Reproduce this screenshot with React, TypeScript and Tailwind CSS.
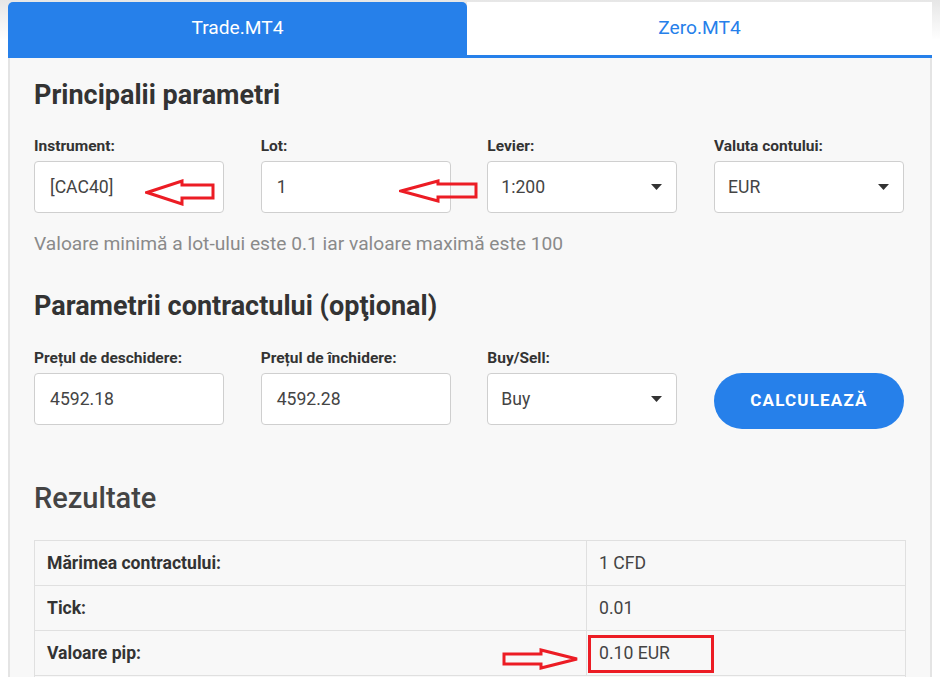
import React from "react";

const Caret = () => (
  <svg width="11" height="6" viewBox="0 0 11 6" className="shrink-0">
    <path d="M0 0 H11 L5.5 6 Z" fill="#333" />
  </svg>
);

function Field({ label, value, select }: { label: string; value: string; select?: boolean }) {
  return (
    <div className="flex flex-col w-[190px]">
      <div className="text-[15.5px] font-bold text-[#333] leading-[18px] h-[18px] whitespace-nowrap">{label}</div>
      <div
        className={
          select
            ? "mt-[6px] h-[52px] bg-white border border-[#cfcfcf] rounded-[4px] flex items-center justify-between pl-[13px] pr-[14px] text-[17.6px] text-[#444]"
            : "mt-[6px] h-[52px] bg-white border border-[#cfcfcf] rounded-[4px] flex items-center justify-between pl-[15px] pr-[14px] text-[17.6px] text-[#444]"
        }
      >
        <span>{value}</span>
        {select && <Caret />}
      </div>
    </div>
  );
}

function LeftArrow({ w, h, back, s1, s2 }: { w: number; h: number; back: number; s1: number; s2: number }) {
  return (
    <svg width={w} height={h} viewBox={`0 0 ${w} ${h}`}>
      <path
        d={`M2 ${h / 2} L${back} 2 L${back} ${s1} L${w - 2} ${s1} L${w - 2} ${s2} L${back} ${s2} L${back} ${h - 2} Z`}
        fill="none"
        stroke="#ec1c24"
        strokeWidth="3"
      />
    </svg>
  );
}

function RightArrow({ w, h, back, s1, s2 }: { w: number; h: number; back: number; s1: number; s2: number }) {
  return (
    <svg width={w} height={h} viewBox={`0 0 ${w} ${h}`}>
      <path
        d={`M${w - 2} ${h / 2} L${back} 2 L${back} ${s1} L2 ${s1} L2 ${s2} L${back} ${s2} L${back} ${h - 2} Z`}
        fill="none"
        stroke="#ec1c24"
        strokeWidth="3"
      />
    </svg>
  );
}

export default function App() {
  return (
    <div
      className="w-[940px] h-[677px] overflow-hidden bg-[linear-gradient(#e6e6e6_0px,#ffffff_40px)] relative"
      style={{ fontFamily: "Roboto, 'Liberation Sans', sans-serif" }}
    >
      <div className="pt-[2px] px-[8px]">
        <div className="flex h-[56px]">
          <div className="w-[459px] bg-[#2680ea] rounded-t-[5px] flex items-center justify-center text-white text-[19.2px] pb-[3px]">
            Trade.MT4
          </div>
          <div className="flex-1 bg-white border-b-[3px] border-[#2680ea] flex items-center justify-center text-[#2680ea] text-[19.2px]">
            Zero.MT4
          </div>
        </div>
        <div className="bg-[#f8f8f8] border-l-2 border-r-2 border-[#e4e4e4] px-[24px] pt-[21px] h-[640px]">
          <h2 className="text-[27px] font-bold text-[#333] leading-[32px]">Principalii parametri</h2>
          <div className="mt-[26px] flex gap-[36.67px] relative">
            <Field label="Instrument:" value="[CAC40]" />
            <Field label="Lot:" value="1" />
            <Field label="Levier:" value="1:200" select />
            <Field label="Valuta contului:" value="EUR" select />
            <div className="absolute left-[111px] top-[42px]">
              <LeftArrow w={70} h={27} back={37} s1={6} s2={19} />
            </div>
            <div className="absolute left-[365px] top-[42px]">
              <LeftArrow w={79} h={24} back={39} s1={5} s2={18} />
            </div>
          </div>
          <p className="mt-[20px] text-[19.2px] text-[#8a8a8a] leading-[22px]">
            Valoare minimă a lot-ului este 0.1 iar valoare maximă este 100
          </p>
          <h2 className="mt-[35px] text-[27px] font-bold text-[#333] leading-[32px]">
            Parametrii contractului (opţional)
          </h2>
          <div className="mt-[27px] flex gap-[36.67px] items-start">
            <Field label="Prețul de deschidere:" value="4592.18" />
            <Field label="Prețul de închidere:" value="4592.28" />
            <Field label="Buy/Sell:" value="Buy" select />
            <button className="mt-[24px] w-[190px] h-[56px] rounded-full bg-[#2680ea] text-white text-[17px] font-bold tracking-[0.07em]">
              CALCULEAZĂ
            </button>
          </div>
          <h2 className="mt-[52px] text-[29px] font-medium text-[#444] leading-[34px]">Rezultate</h2>
          <div className="mt-[25px] border border-[#e0e0e0] text-[17.6px]">
            <div className="flex h-[45px] border-b border-[#e0e0e0]">
              <div className="w-[552px] border-r border-[#e0e0e0] pl-[12px] flex items-center font-bold text-[#333]">
                Mărimea contractului:
              </div>
              <div className="flex-1 pl-[12px] flex items-center text-[#444]">1 CFD</div>
            </div>
            <div className="flex h-[45px] border-b border-[#e0e0e0]">
              <div className="w-[552px] border-r border-[#e0e0e0] pl-[12px] flex items-center font-bold text-[#333]">
                Tick:
              </div>
              <div className="flex-1 pl-[12px] flex items-center text-[#444]">0.01</div>
            </div>
            <div className="flex h-[45px] border-b border-[#e0e0e0] relative">
              <div className="w-[552px] border-r border-[#e0e0e0] pl-[12px] flex items-center font-bold text-[#333]">
                Valoare pip:
              </div>
              <div className="flex-1 pl-[12px] flex items-center text-[#444]">0.10 EUR</div>
              <div className="absolute left-[553px] top-[4px] w-[126px] h-[38px] border-[3px] border-[#ec1c24]" />
              <div className="absolute left-[467px] top-[17px]">
                <RightArrow w={77} h={22} back={39} s1={6} s2={16} />
              </div>
            </div>
            <div className="h-[45px]" />
          </div>
        </div>
      </div>
    </div>
  );
}
